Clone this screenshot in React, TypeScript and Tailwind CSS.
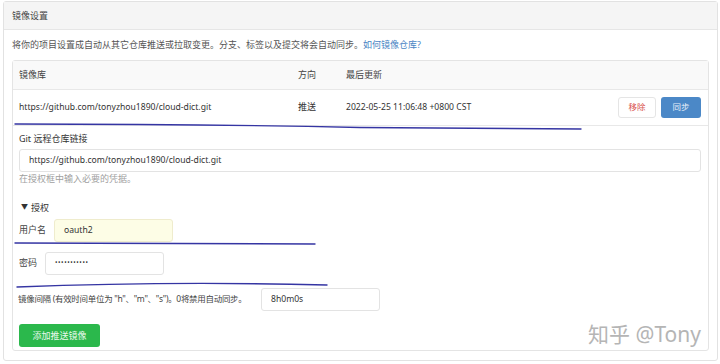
const cjk = "font-['Noto_Sans','Noto_Sans_CJK_SC',sans-serif]";

const Field = ({ label, value, className }: { label: string; value: string; className: string }) => (
  <div className="flex items-center gap-[8px]">
    <span className="text-[9px] text-[#444]">{label}</span>
    <div className={`h-[23px] w-[119px] rounded-[3px] border border-[#e3e3e3] pl-[9px] flex items-center text-[#333] ${className}`}>
      {value}
    </div>
  </div>
);

const PenLines = () => (
  <svg className="pointer-events-none absolute left-0 top-0" width="720" height="364" viewBox="0 0 720 364" fill="none">
    <path d="M15 124 Q200 124 360 127.5 L581 129" stroke="#3535a3" strokeWidth="1.4" strokeLinecap="round" />
    <path d="M15 243 Q160 243.5 315 244" stroke="#3535a3" strokeWidth="1.4" strokeLinecap="round" />
    <path d="M17 287 Q170 281 327 285" stroke="#3535a3" strokeWidth="1.4" strokeLinecap="round" />
  </svg>
);

export default function App() {
  return (
    <div className={`relative w-[720px] h-[364px] bg-white pl-[3px] pt-[1px] ${cjk}`}>
      <div className="w-[715px] h-[360px] rounded-[3px] border border-[#e2e2e2] flex flex-col">
        <div className="h-[28px] bg-[#f5f5f5] border-b border-[#e6e6e6] flex items-center pl-[8px] text-[9px] text-[#444]">
          镜像设置
        </div>
        <div className="flex-1 px-[8px] pb-[9px] flex flex-col">
          <div className="h-[30px] flex items-center text-[9px] text-[#555]">
            将你的项目设置成自动从其它仓库推送或拉取变更。分支、标签以及提交将会自动同步。
            <span className="text-[#4a85c4]">如何镜像仓库?</span>
          </div>
          <div className="flex-1 w-[697px] border border-[#e4e4e4] rounded-[3px] flex flex-col">
            <div className="h-[29px] bg-[#f9f9f9] border-b border-[#e8e8e8] flex items-center text-[9px] text-[#444]">
              <span className="w-[285px] pl-[6px]">镜像库</span>
              <span className="w-[48px]">方向</span>
              <span>最后更新</span>
            </div>
            <div className="h-[36px] border-b border-[#e8e8e8] flex items-center text-[8.6px] text-[#333]">
              <span className="w-[285px] pl-[6px]">https://github.com/tonyzhou1890/cloud-dict.git</span>
              <span className="w-[48px] text-[9px]">推送</span>
              <span className="flex-1">2022-05-25 11:06:48 +0800 CST</span>
              <div className="flex gap-[5px] pr-[7px]">
                <div className="w-[38px] h-[21px] rounded-[3px] border border-[#e5e5e5] flex items-center justify-center text-[8.5px] text-[#d9534f]">
                  移除
                </div>
                <div className="w-[40px] h-[21px] rounded-[3px] bg-[#4b88c7] flex items-center justify-center text-[8.5px] text-[#e8f0fa]">
                  同步
                </div>
              </div>
            </div>
            <div className="px-[6px] flex flex-col">
              <div className="h-[23px] flex items-end pb-[3px] text-[9px] text-[#333]">Git 远程仓库链接</div>
              <div className="h-[23px] w-[682px] rounded-[3px] border border-[#e3e3e3] pl-[9px] flex items-center text-[8.6px] text-[#333]">
                https://github.com/tonyzhou1890/cloud-dict.git
              </div>
              <div className="h-[14px] flex items-center text-[9px] text-[#a0a0a0]">在授权框中输入必要的凭据。</div>
              <div className="h-[33px] flex items-center gap-[3px] pt-[11px] pl-[2px] text-[9px] text-[#333]">
                <span className="text-[7px]">▼</span>
                <span>授权</span>
              </div>
              <Field label="用户名" value="oauth2" className="bg-[#fdfde6] border-[#efeccd] text-[8.6px]" />
              <div className="h-[10px]" />
              <Field label="密码" value="•••••••••••" className="bg-white tracking-[0.6px] text-[6.5px]" />
              <div className="h-[13px]" />
              <div className="flex items-center -ml-[1px]">
                <span className="w-[243px] whitespace-nowrap text-[8.5px] tracking-[-0.3px] text-[#444]">
                  镜像间隔 (有效时间单位为 "h"、"m"、"s")。0将禁用自动同步。
                </span>
                <div className="h-[23px] w-[119px] rounded-[3px] border border-[#e3e3e3] pl-[9px] flex items-center text-[8.6px] text-[#333]">
                  8h0m0s
                </div>
              </div>
              <div className="h-[10px]" />
              <div className="flex items-center justify-between">
                <div className="w-[81px] h-[23px] rounded-[3px] bg-[#2bb84c] flex items-center justify-center text-[9px] text-[#eaf8ee]">
                  添加推送镜像
                </div>
                <span className="text-[21px] text-[#b5b5b5] pr-[1px] -mt-[2px] [text-shadow:0_0_2px_#fff]">知乎 @Tony</span>
              </div>
            </div>
          </div>
        </div>
      </div>
      <PenLines />
    </div>
  );
}
